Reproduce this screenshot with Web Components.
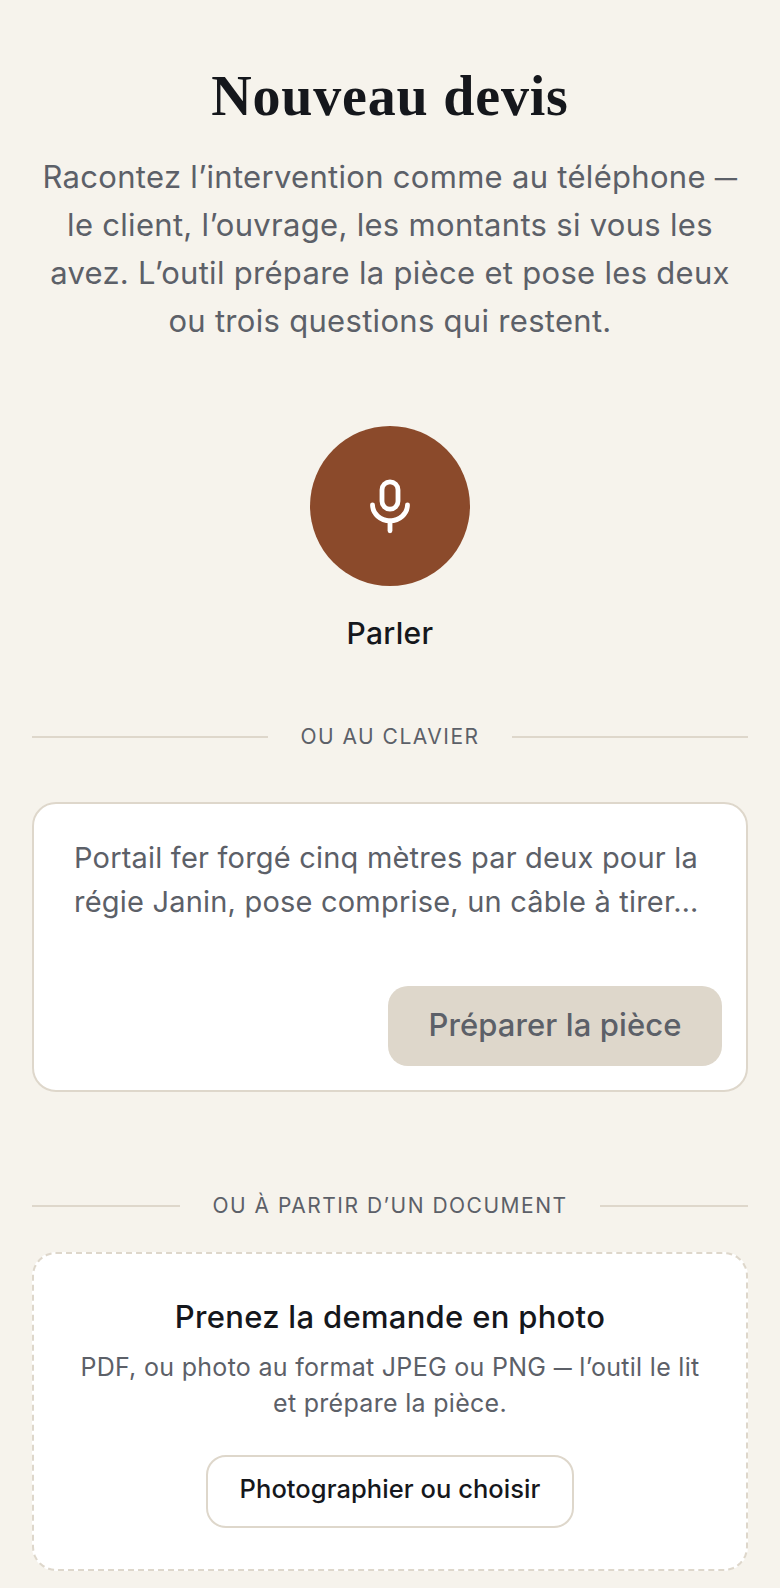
<!DOCTYPE html>
<html lang="fr">
<head>
<meta charset="utf-8">
<title>Nouveau devis</title>
<style>
  html, body { margin: 0; background: #f6f3ec; }
  body { font-family: "Inter", "Noto Sans", sans-serif; color: #15171c; }
  .dash { font-size: .72em; font-weight: 600; line-height: 0; vertical-align: .1em; }
</style>
</head>
<body>
<devis-page>
  <page-intro>
    <span slot="title">Nouveau devis</span>
    Racontez l’intervention comme au téléphone <span class="dash">—</span> le client, l’ouvrage, les montants si vous les avez. L’outil prépare la pièce et pose les deux ou trois questions qui restent.
  </page-intro>
  <mic-button>Parler</mic-button>
  <or-divider style="--top: 65px">OU AU CLAVIER</or-divider>
  <text-card placeholder="Portail fer forgé cinq mètres par deux pour la régie Janin, pose comprise, un câble à tirer…">Préparer la pièce</text-card>
  <or-divider style="--top: 98px">OU À PARTIR D’UN DOCUMENT</or-divider>
  <upload-card>
    <span slot="title">Prenez la demande en photo</span>
    <span slot="desc">PDF, ou photo au format JPEG ou PNG <span class="dash">—</span> l’outil le lit<br>et prépare la pièce.</span>
    Photographier ou choisir
  </upload-card>
</devis-page>

<script>
class DevisPage extends HTMLElement {
  constructor() {
    super();
    this.attachShadow({mode: "open"}).innerHTML = `
      <style>
        :host { display: block; box-sizing: border-box; width: 780px; height: 1588px; padding: 0 32px; overflow: hidden; }
      </style>
      <slot></slot>`;
  }
}

class PageIntro extends HTMLElement {
  constructor() {
    super();
    this.attachShadow({mode: "open"}).innerHTML = `
      <style>
        :host { display: block; text-align: center; padding-top: 64px; }
        h1 { margin: 0 0 25px; font: 700 56px/64px "Liberation Serif", serif; letter-spacing: 0.8px; color: #15171c; }
        p { margin: 0; padding: 0 4px; font-size: 31px; line-height: 48px; letter-spacing: 0.3px; color: #5c6068; }
      </style>
      <h1><slot name="title"></slot></h1>
      <p><slot></slot></p>`;
  }
}

class MicButton extends HTMLElement {
  constructor() {
    super();
    this.attachShadow({mode: "open"}).innerHTML = `
      <style>
        :host { display: flex; flex-direction: column; align-items: center; gap: 24px; padding-top: 81px; }
        .round { width: 160px; height: 160px; border-radius: 50%; background: #8b4a2b; display: flex; align-items: center; justify-content: center; }
        svg { display: block; width: 64px; height: 64px; }
        .label { font-size: 30px; line-height: 46px; font-weight: 500; letter-spacing: 0.3px; color: #15171c; }
      </style>
      <div class="round">
        <svg viewBox="0 0 64 64" fill="none" stroke="#fff" stroke-width="4.8" stroke-linecap="round">
          <rect x="24" y="7.8" width="16" height="27.4" rx="8"/>
          <path d="M14.5 30.8a17.5 16 0 0 0 35 0"/>
          <path d="M32 46.8v10"/>
        </svg>
      </div>
      <div class="label"><slot></slot></div>`;
  }
}

class OrDivider extends HTMLElement {
  constructor() {
    super();
    this.attachShadow({mode: "open"}).innerHTML = `
      <style>
        :host { display: flex; align-items: center; gap: 32px; padding-top: var(--top, 74px); }
        i { flex: 1; height: 2px; background: #ded7cb; }
        span { font-size: 21px; line-height: 32px; letter-spacing: 1.5px; color: #5c6068; }
      </style>
      <i></i><span><slot></slot></span><i></i>`;
  }
}

class TextCard extends HTMLElement {
  constructor() {
    super();
    this.attachShadow({mode: "open"}).innerHTML = `
      <style>
        :host { display: block; margin-top: 49px; }
        .card { box-sizing: border-box; height: 290px; background: #fff; border: 2px solid #ded7cb; border-radius: 24px; padding: 24px; display: flex; flex-direction: column; }
        .ph { flex: 1; padding: 8px 16px 0 16px; font-size: 29px; line-height: 44px; letter-spacing: 0.2px; color: #5c6068; }
        .row { display: flex; justify-content: flex-end; }
        button { font: 500 31px/40px "Inter", sans-serif; letter-spacing: 0.1px; height: 80px; width: 334px; padding: 0 0 2px; border: 0; border-radius: 20px; background: #ded7cb; color: #5c6068; }
      </style>
      <div class="card">
        <div class="ph"></div>
        <div class="row"><button><slot></slot></button></div>
      </div>`;
    this.shadowRoot.querySelector(".ph").textContent = this.getAttribute("placeholder");
  }
}

class UploadCard extends HTMLElement {
  constructor() {
    super();
    this.attachShadow({mode: "open"}).innerHTML = `
      <style>
        :host { display: block; margin-top: 30px; }
        .card { box-sizing: border-box; height: 319px; background: #fff; border: 2px dashed #ded7cb; border-radius: 24px; padding: 41px 40px 0; text-align: center; display: flex; flex-direction: column; align-items: center; }
        h2 { margin: 0; font-size: 31px; line-height: 44px; font-weight: 500; letter-spacing: 0.3px; color: #15171c; }
        p { margin: 10px 0 0; font-size: 25px; line-height: 36px; letter-spacing: 0.3px; color: #5c6068; }
        button { margin-top: 34px; width: 368px; height: 73px; padding: 0 0 5px; background: #fff; border: 2px solid #ded7cb; border-radius: 20px; font: 500 25.5px/34px "Inter", sans-serif; letter-spacing: 0.05px; color: #15171c; }
      </style>
      <div class="card">
        <h2><slot name="title"></slot></h2>
        <p><slot name="desc"></slot></p>
        <button><slot></slot></button>
      </div>`;
  }
}

customElements.define("devis-page", DevisPage);
customElements.define("page-intro", PageIntro);
customElements.define("mic-button", MicButton);
customElements.define("or-divider", OrDivider);
customElements.define("text-card", TextCard);
customElements.define("upload-card", UploadCard);
</script>
</body>
</html>
